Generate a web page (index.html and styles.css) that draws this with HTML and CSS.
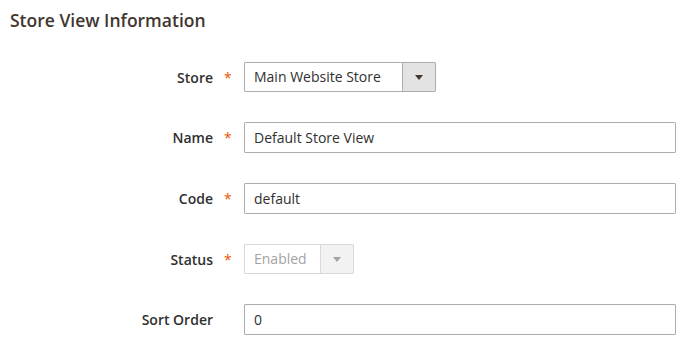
FILE: index.html
```html
<!DOCTYPE html>
<html lang="en">
<head>
  <meta charset="UTF-8">
  <title>Store View Information</title>
  <link rel="stylesheet" href="styles.css">
</head>
<body>
  <div class="fieldset">
    <h2 class="legend">Store View Information</h2>

    <div class="field">
      <label class="label">Store</label>
      <span class="req">*</span>
      <div class="select">
        <span class="select-value">Main Website Store</span>
        <span class="select-btn"><span class="arrow"></span></span>
      </div>
    </div>

    <div class="field">
      <label class="label">Name</label>
      <span class="req">*</span>
      <input class="input" type="text" value="Default Store View">
    </div>

    <div class="field">
      <label class="label">Code</label>
      <span class="req">*</span>
      <input class="input" type="text" value="default">
    </div>

    <div class="field">
      <label class="label">Status</label>
      <span class="req">*</span>
      <div class="select select-small disabled">
        <span class="select-value">Enabled</span>
        <span class="select-btn"><span class="arrow"></span></span>
      </div>
    </div>

    <div class="field">
      <label class="label">Sort Order</label>
      <span class="req"></span>
      <input class="input" type="text" value="0">
    </div>
  </div>
</body>
</html>
```

FILE: styles.css
```css
:root {
  --text-dark: #303030;
  --title: #41362f;
  --border: #adadad;
  --required: #eb5202;
  --btn-bg: #e3e3e3;
}

body {
  margin: 0;
  font-family: 'Open Sans', 'Liberation Sans', sans-serif;
  font-size: 14px;
  color: var(--text-dark);
  background: #fff;
}

.fieldset {
  padding: 8px 9px 0 10px;
}

.legend {
  margin: 0 0 30px 0;
  font-size: 17.5px;
  font-weight: 600;
  line-height: 24px;
  color: var(--title);
}

.field {
  display: flex;
  align-items: center;
  margin-bottom: 30px;
}

.label {
  width: 203px;
  text-align: right;
  font-weight: 600;
  color: var(--text-dark);
}

.req {
  width: 31px;
  box-sizing: border-box;
  padding-left: 11px;
  color: var(--required);
  font-size: 14px;
}

.input {
  flex: 1;
  height: 31px;
  box-sizing: border-box;
  border: 1px solid var(--border);
  border-radius: 1px;
  padding: 0 9px;
  font-family: inherit;
  font-size: 14px;
  color: var(--text-dark);
  outline: none;
}

.select {
  display: flex;
  width: 192px;
  height: 30px;
  box-sizing: border-box;
  border: 1px solid var(--border);
  border-radius: 1px;
  background: #fff;
}

.select-small {
  width: 110px;
}

.select-value {
  flex: 1;
  padding-left: 9px;
  line-height: 28px;
  white-space: nowrap;
  overflow: hidden;
}

.select-btn {
  width: 32px;
  background: var(--btn-bg);
  border-left: 1px solid var(--border);
  display: flex;
  align-items: center;
  justify-content: center;
}

.arrow {
  width: 0;
  height: 0;
  border-left: 4px solid transparent;
  border-right: 4px solid transparent;
  border-top: 5px solid var(--title);
}

.disabled {
  opacity: 0.45;
}
```
